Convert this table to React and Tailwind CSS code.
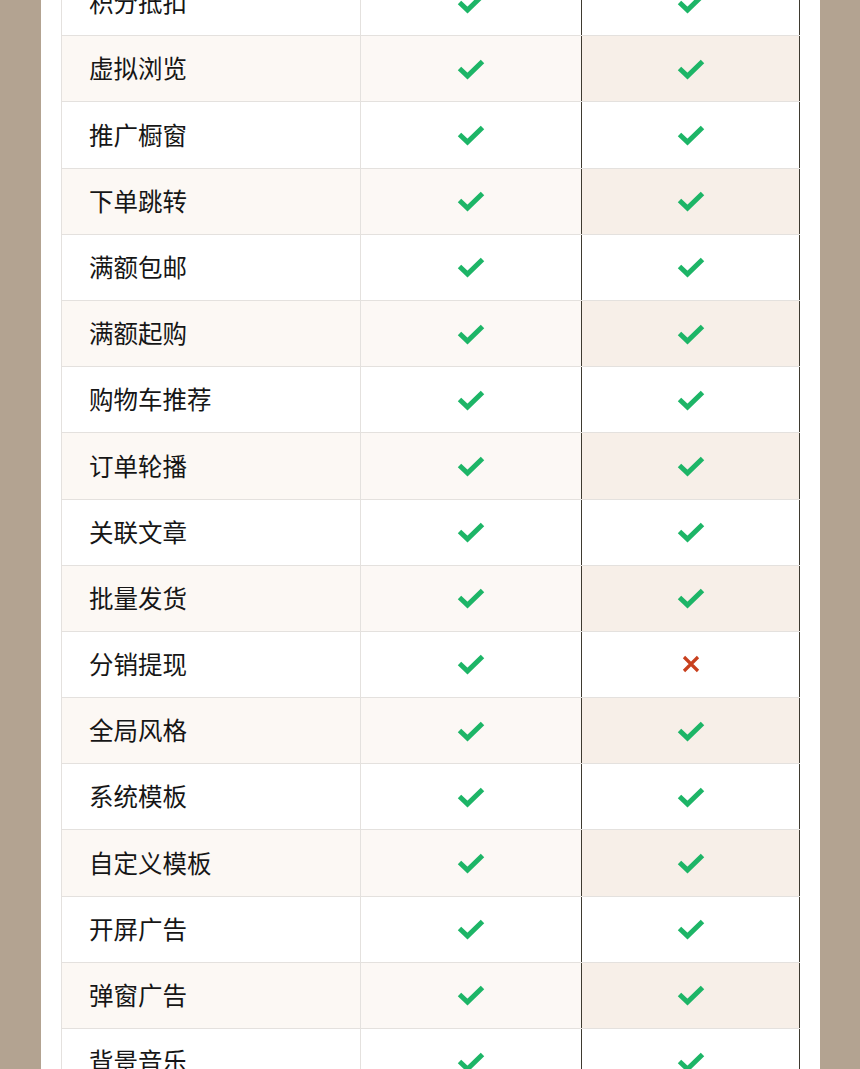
const rows = [
  { name: "积分抵扣", pro: true },
  { name: "虚拟浏览", pro: true },
  { name: "推广橱窗", pro: true },
  { name: "下单跳转", pro: true },
  { name: "满额包邮", pro: true },
  { name: "满额起购", pro: true },
  { name: "购物车推荐", pro: true },
  { name: "订单轮播", pro: true },
  { name: "关联文章", pro: true },
  { name: "批量发货", pro: true },
  { name: "分销提现", pro: false },
  { name: "全局风格", pro: true },
  { name: "系统模板", pro: true },
  { name: "自定义模板", pro: true },
  { name: "开屏广告", pro: true },
  { name: "弹窗广告", pro: true },
  { name: "背景音乐", pro: true },
];

const Check = () => (
  <svg width="28" height="22" viewBox="0 0 28 22" fill="none">
    <polyline points="2.5,10.5 10.5,18 25.5,3.5" stroke="#1db567" strokeWidth="5" />
  </svg>
);

const Cross = () => (
  <svg width="20" height="20" viewBox="0 0 20 20" fill="none">
    <path d="M3 3 L17 17 M17 3 L3 17" stroke="#c8401e" strokeWidth="3.2" />
  </svg>
);

const App = () => {
  return (
    <div className="bg-[#b3a391] pr-[40px] pl-[41px] overflow-hidden h-[1069px]">
      <div className="bg-white h-full px-[20px] overflow-hidden">
        <div className="mt-[-30px] font-['Noto_Sans_CJK_SC','Noto_Sans',sans-serif] text-[#161616]">
          {rows.map((r, i) => {
            const striped = i % 2 === 1;
            return (
              <div key={r.name} className="flex h-[66.2px] border-b border-[#e4e1de]">
                <div
                  className={`w-[300px] flex items-center pl-[27px] text-[24.5px] border-l border-r border-[#e4e1de] ${
                    striped ? "bg-[#fcf8f4]" : "bg-white"
                  }`}
                >
                  {r.name}
                </div>
                <div
                  className={`w-[220px] flex items-center justify-center ${
                    striped ? "bg-[#fcf8f5]" : "bg-white"
                  }`}
                >
                  <Check />
                </div>
                <div
                  className={`flex-1 flex items-center justify-center border-l-[1.5px] border-r-[1.5px] border-[#3e3a30] ${
                    striped ? "bg-[#f7efe8]" : "bg-white"
                  }`}
                >
                  {r.pro ? <Check /> : <Cross />}
                </div>
              </div>
            );
          })}
        </div>
      </div>
    </div>
  );
};

export default App;
